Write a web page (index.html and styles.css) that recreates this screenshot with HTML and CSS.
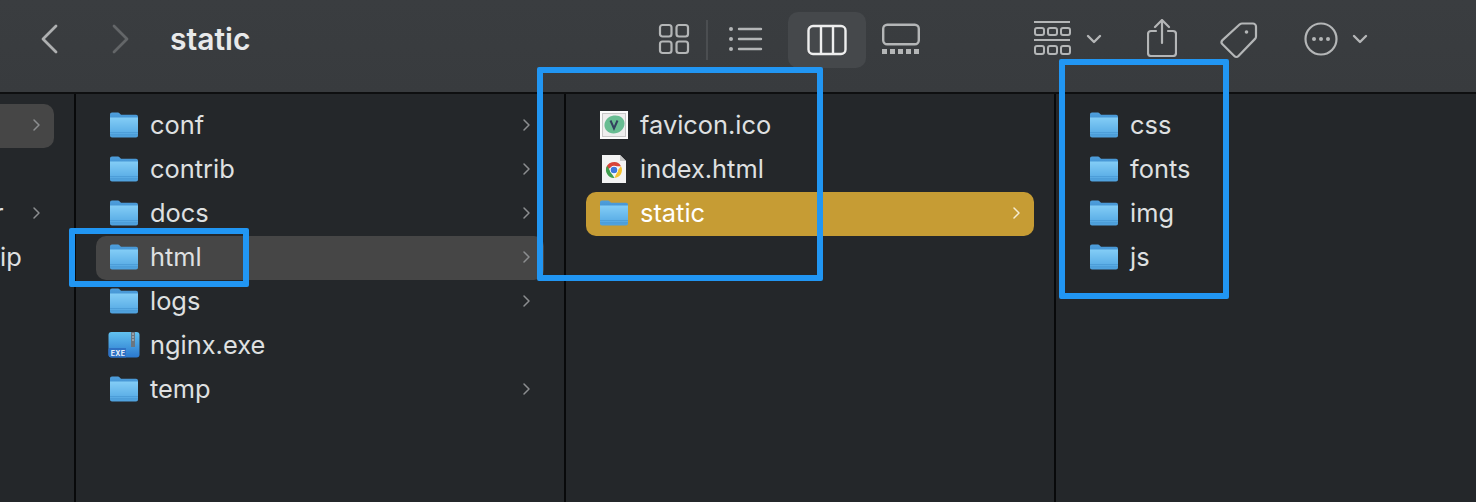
FILE: index.html
```html
<!DOCTYPE html>
<html lang="en">
<head>
    <meta charset="UTF-8">
    <title>static</title>
    <link rel="stylesheet" href="styles.css">
</head>

<body>
    <!-- shared icons -->
    <svg class="defs" width="0" height="0">
        <defs>
            <linearGradient id="folderBack" x1="0" y1="0" x2="0" y2="1">
                <stop offset="0" stop-color="#4f9fdc"/>
                <stop offset="1" stop-color="#3f8fd0"/>
            </linearGradient>
            <linearGradient id="folderFront" x1="0" y1="0" x2="0" y2="1">
                <stop offset="0" stop-color="#83cdf6"/>
                <stop offset="0.7" stop-color="#5fb1e8"/>
                <stop offset="1" stop-color="#4d9fdb"/>
            </linearGradient>
            <symbol id="folder" viewBox="0 0 28 26">
                <path d="M0 2.500C0 1.200 .8.500 2 .5h5.500c1 0 1.500.4 2.200 1L11 2.800h15c1.200 0 2 .8 2 2V10H0z" fill="url(#folderBack)"/>
                <path d="M0 5.500h28v18c0 1.200-.8 2-2 2H2c-1.200 0-2-.8-2-2z" fill="url(#folderFront)"/>
                <path d="M0 20.500h28M0 22.800h28" stroke="#3d8ecb" stroke-width=".7" opacity=".7"/>
            </symbol>
            <symbol id="chevron" viewBox="0 0 10 14">
                <path d="M2 2l5 5-5 5" fill="none" stroke="currentColor" stroke-width="1.500" stroke-linecap="round" stroke-linejoin="round"/>
            </symbol>
        </defs>
    </svg>

    <header class="toolbar">
        <svg class="nav-back" width="20" height="30" viewBox="0 0 20 30"><path d="M17 2L4 15l13 13" fill="none" stroke="currentColor" stroke-width="2.800" stroke-linecap="round" stroke-linejoin="round"/></svg>
        <svg class="nav-forward" width="20" height="30" viewBox="0 0 20 30"><path d="M3 2l13 13L3 28" fill="none" stroke="currentColor" stroke-width="2.800" stroke-linecap="round" stroke-linejoin="round"/></svg>
        <h1 class="title">static</h1>

        <div class="views">
            <svg class="tool" width="32" height="32" viewBox="0 0 32 32" fill="none" stroke="currentColor" stroke-width="2.200">
                <rect x="2" y="2" width="11.500" height="11.500" rx="2.500"/><rect x="18.500" y="2" width="11.500" height="11.500" rx="2.500"/>
                <rect x="2" y="18.500" width="11.500" height="11.500" rx="2.500"/><rect x="18.500" y="18.500" width="11.500" height="11.500" rx="2.500"/>
            </svg>
            <span class="views-sep"></span>
            <svg class="tool tool-list" width="36" height="26" viewBox="0 0 36 26" fill="none" stroke="currentColor" stroke-width="2.400" stroke-linecap="round">
                <path d="M11 3h22M11 13h22M11 23h22"/>
                <circle cx="3" cy="3" r="2" fill="currentColor" stroke="none"/><circle cx="3" cy="13" r="2" fill="currentColor" stroke="none"/><circle cx="3" cy="23" r="2" fill="currentColor" stroke="none"/>
            </svg>
            <span class="view-active">
                <svg width="40" height="32" viewBox="0 0 40 32" fill="none" stroke="currentColor" stroke-width="2.400">
                    <rect x="1.500" y="2" width="37" height="28" rx="4.500"/><path d="M14 2v28M26 2v28"/>
                </svg>
            </span>
            <svg class="tool" width="38" height="32" viewBox="0 0 38 32">
                <rect x="1.200" y="1.700" width="35.600" height="19.600" rx="4" fill="none" stroke="currentColor" stroke-width="2.400"/>
                <path fill="currentColor" d="M0 26h5v5H0zM8 26h5v5H8zM16 26h5v5h-5zM24 26h5v5h-5zM32 26h5v5h-5z"/>
            </svg>
        </div>

        <div class="actions">
            <svg class="tool" width="37" height="36" viewBox="0 0 37 36" fill="none" stroke="currentColor" stroke-width="2">
                <path d="M0 1h36M0 19h36"/>
                <rect x="1" y="7" width="9" height="7" rx="2"/><rect x="14" y="7" width="9" height="7" rx="2"/><rect x="27" y="7" width="9" height="7" rx="2"/>
                <rect x="1" y="25" width="9" height="8" rx="2"/><rect x="14" y="25" width="9" height="8" rx="2"/><rect x="27" y="25" width="9" height="8" rx="2"/>
            </svg>
            <svg class="caret caret-view" width="16" height="10" viewBox="0 0 16 10"><path d="M2 2l6 6 6-6" fill="none" stroke="currentColor" stroke-width="2.400" stroke-linecap="round" stroke-linejoin="round"/></svg>
            <svg class="tool tool-share" width="30" height="38" viewBox="0 0 30 38" fill="none" stroke="currentColor" stroke-width="2.200" stroke-linecap="round" stroke-linejoin="round">
                <path d="M9 12H4a3 3 0 0 0-3 3v19a3 3 0 0 0 3 3h22a3 3 0 0 0 3-3V15a3 3 0 0 0-3-3h-5"/>
                <path d="M15 24V2M8 8l7-7 7 7"/>
            </svg>
            <svg class="tool tool-tag" width="38" height="38" viewBox="0 0 38 38" fill="none" stroke="currentColor" stroke-width="2.200" stroke-linejoin="round">
                <path d="M22 2.500l11 0c1.500 0 3 1.500 3 3v10c0 1-.4 1.800-1 2.400L18.500 35c-1.200 1.200-3 1.200-4.200 0L2.500 23.300c-1.200-1.200-1.200-3 0-4.200L19.800 3.300c.6-.5 1.300-.8 2.200-.8z"/>
                <circle cx="26.500" cy="11" r="1.800" fill="currentColor" stroke="none"/>
            </svg>
            <svg class="tool tool-more" width="34" height="34" viewBox="0 0 34 34" fill="none" stroke="currentColor" stroke-width="2.200">
                <circle cx="17" cy="17" r="15.500"/>
                <circle cx="10" cy="17" r="2" fill="currentColor" stroke="none"/><circle cx="17" cy="17" r="2" fill="currentColor" stroke="none"/><circle cx="24" cy="17" r="2" fill="currentColor" stroke="none"/>
            </svg>
            <svg class="caret caret-more" width="16" height="10" viewBox="0 0 16 10"><path d="M2 2l6 6 6-6" fill="none" stroke="currentColor" stroke-width="2.400" stroke-linecap="round" stroke-linejoin="round"/></svg>
        </div>
    </header>

    <main class="columns">
        <section class="col col-parent">
            <div class="row row-dim row-cut">
                <span class="spacer"></span>
                <svg class="chev"><use href="#chevron"/></svg>
            </div>
            <div class="row row-cut"></div>
            <div class="row row-cut">
                <span class="name-cut">r</span>
                <span class="spacer"></span>
                <svg class="chev"><use href="#chevron"/></svg>
            </div>
            <div class="row row-cut">
                <span class="name name-edge">ip</span>
            </div>
        </section>

        <section class="col col-nginx">
            <div class="row"><svg class="icon"><use href="#folder"/></svg><span class="name">conf</span><svg class="chev"><use href="#chevron"/></svg></div>
            <div class="row"><svg class="icon"><use href="#folder"/></svg><span class="name">contrib</span><svg class="chev"><use href="#chevron"/></svg></div>
            <div class="row"><svg class="icon"><use href="#folder"/></svg><span class="name">docs</span><svg class="chev"><use href="#chevron"/></svg></div>
            <div class="row row-dim"><svg class="icon"><use href="#folder"/></svg><span class="name">html</span><svg class="chev"><use href="#chevron"/></svg></div>
            <div class="row"><svg class="icon"><use href="#folder"/></svg><span class="name">logs</span><svg class="chev"><use href="#chevron"/></svg></div>
            <div class="row">
                <svg class="icon icon-exe" viewBox="0 0 32 28">
                    <defs>
                        <linearGradient id="exeFill" x1="0" y1="0" x2="0" y2="1">
                            <stop offset="0" stop-color="#62c2f0"/><stop offset="1" stop-color="#2a78cf"/>
                        </linearGradient>
                    </defs>
                    <rect x=".5" y="1" width="31" height="25.500" rx="3" fill="url(#exeFill)"/>
                    <rect x="23" y="1" width="4" height="15" fill="#6b7680"/>
                    <path d="M24 3h2M24 6h2M24 9h2" stroke="#c3cbd1" stroke-width="1"/>
                    <path d="M.5 18.500c0-.8.7-1.500 1.500-1.500h16v9.500H3.500a3 3 0 0 1-3-3z" fill="#2f71c4"/>
                    <text class="exe-label" x="2.800" y="24.700">EXE</text>
                </svg>
                <span class="name">nginx.exe</span>
            </div>
            <div class="row"><svg class="icon"><use href="#folder"/></svg><span class="name">temp</span><svg class="chev"><use href="#chevron"/></svg></div>
        </section>

        <section class="col col-html">
            <div class="row">
                <svg class="icon icon-file" viewBox="0 0 28 28">
                    <rect width="28" height="28" fill="#fbfbfb"/>
                    <rect x="2.500" y="2.500" width="23" height="23" fill="#eeeeee" stroke="#c8c8c8"/>
                    <path d="M4.500 13c1-6 6-8.500 11-8.500s9 3.500 9 8c0 6-5.500 10-11 10-5 0-9.800-4-9-9.500z" fill="#68bd92"/>
                    <path d="M10.500 9.500l3.500 8 3.500-8" fill="none" stroke="#33415f" stroke-width="2"/>
                </svg>
                <span class="name">favicon.ico</span>
            </div>
            <div class="row">
                <svg class="icon icon-file" viewBox="0 0 28 28">
                    <path d="M2 0h18l6 6v22H2z" fill="#f3f3f3"/>
                    <path d="M20 0l6 6h-6z" fill="#c9c9c9"/>
                    <path d="M6 15a8 8 0 0 1 15-3.800H14z" fill="#d8443a"/>
                    <path d="M21 11.200A8 8 0 0 1 14.500 23L18 15z" fill="#f3c230"/>
                    <path d="M14.500 23A8 8 0 0 1 7.200 10.800l3.800 6.700z" fill="#3f9e4e"/>
                    <circle cx="14" cy="15" r="4.200" fill="#fff"/>
                    <circle cx="14" cy="15" r="3.300" fill="#3f78dc"/>
                </svg>
                <span class="name">index.html</span>
            </div>
            <div class="row row-active"><svg class="icon"><use href="#folder"/></svg><span class="name">static</span><svg class="chev"><use href="#chevron"/></svg></div>
        </section>

        <section class="col col-static">
            <div class="row"><svg class="icon"><use href="#folder"/></svg><span class="name">css</span></div>
            <div class="row"><svg class="icon"><use href="#folder"/></svg><span class="name">fonts</span></div>
            <div class="row"><svg class="icon"><use href="#folder"/></svg><span class="name">img</span></div>
            <div class="row"><svg class="icon"><use href="#folder"/></svg><span class="name">js</span></div>
        </section>
    </main>

    <!-- blue annotation boxes drawn over the screenshot -->
    <div class="mark mark-html"></div>
    <div class="mark mark-files"></div>
    <div class="mark mark-static"></div>
</body>

</html>
```

FILE: styles.css
```css
html, body {
    margin: 0;
    height: 100%;
}

body {
    position: relative;
    width: 1476px;
    height: 502px;
    overflow: hidden;
    background-color: #24272a;
    color: #dfe0e1;
    font-family: 'Inter', 'Liberation Sans', sans-serif;
    display: flex;
    flex-direction: column;
}

.defs {
    position: absolute;
}

/* toolbar */
.toolbar {
    box-sizing: border-box;
    height: 94px;
    flex: none;
    display: flex;
    align-items: center;
    background: linear-gradient(#3a3d40, #383b3e);
    border-bottom: 2px solid #0e0f10;
    color: #b4b6b7;
    padding: 0 0 14px 39px;
}

.nav-back {
    color: #aeb0b1;
}

.nav-forward {
    color: #636668;
    margin-left: 52px;
}

.title {
    margin: 0 0 0 39px;
    font-size: 30px;
    font-weight: 600;
    color: #e8e9ea;
    width: 200px;
}

.views {
    display: flex;
    align-items: center;
    margin-left: 288px;
}

.views-sep {
    width: 2px;
    height: 40px;
    background: #4b4e51;
    margin: 2px 20px 0 16px;
}

.view-active {
    display: flex;
    align-items: center;
    justify-content: center;
    width: 78px;
    height: 56px;
    margin: 2px 16px 0 24px;
    border-radius: 10px;
    background: #45484b;
    color: #eeeeee;
}

.actions {
    display: flex;
    align-items: center;
    margin-left: 114px;
}

.caret-view {
    margin-left: 15px;
}

.caret-more {
    margin-left: 14px;
}

.tool-share {
    margin: 0 0 3px 45px;
}

.tool-tag {
    margin: 1px 0 0 43px;
}

.tool-more {
    margin-left: 46px;
}

/* columns */
.columns {
    flex: 1;
    display: flex;
}

.col {
    box-sizing: border-box;
    border-right: 2px solid #08090a;
    padding: 10px 20px 0 20px;
}

.col-parent {
    width: 76px;
    padding: 10px 20px 0 0;
}

.col-nginx {
    width: 490px;
}

.col-html {
    width: 490px;
}

.col-static {
    flex: 1;
    border-right: 0;
}

.row {
    box-sizing: border-box;
    height: 44px;
    display: flex;
    align-items: center;
    padding: 0 12px 2px 14px;
    border-radius: 10px;
}

.row-dim {
    background: #464646;
}

.row-active {
    background: #c69c34;
    color: #fff;
}

.row-cut {
    padding-left: 0;
    border-top-left-radius: 0;
    border-bottom-left-radius: 0;
}

.spacer {
    flex: 1;
}

.icon {
    width: 28px;
    height: 26px;
    flex: none;
}

.icon-file {
    height: 28px;
}

.icon-exe {
    width: 32px;
    height: 28px;
    margin: 0 -2px;
}

.name {
    flex: 1;
    margin-left: 12px;
    font-size: 25.400px;
    line-height: 30px;
}

.name-edge {
    margin-left: 0;
}

/* only the tip of this name shows at the window edge */
.name-cut {
    margin: 0 0 0 -6px;
    font-size: 25.400px;
    line-height: 30px;
}

.chev {
    width: 10px;
    height: 14px;
    color: #8c8e90;
    flex: none;
}

.row-active .chev {
    color: #f6ecd2;
}

.exe-label {
    font-size: 7px;
    font-weight: 700;
    fill: #e8f2fb;
    letter-spacing: .3px;
}

/* annotation boxes */
.mark {
    position: absolute;
    box-sizing: border-box;
    border: 6px solid #2196f3;
    border-radius: 2px;
}

.mark-html {
    left: 69px;
    top: 228px;
    width: 180px;
    height: 59px;
}

.mark-files {
    left: 537px;
    top: 67px;
    width: 286px;
    height: 214px;
}

.mark-static {
    left: 1059px;
    top: 59px;
    width: 170px;
    height: 240px;
}
```
